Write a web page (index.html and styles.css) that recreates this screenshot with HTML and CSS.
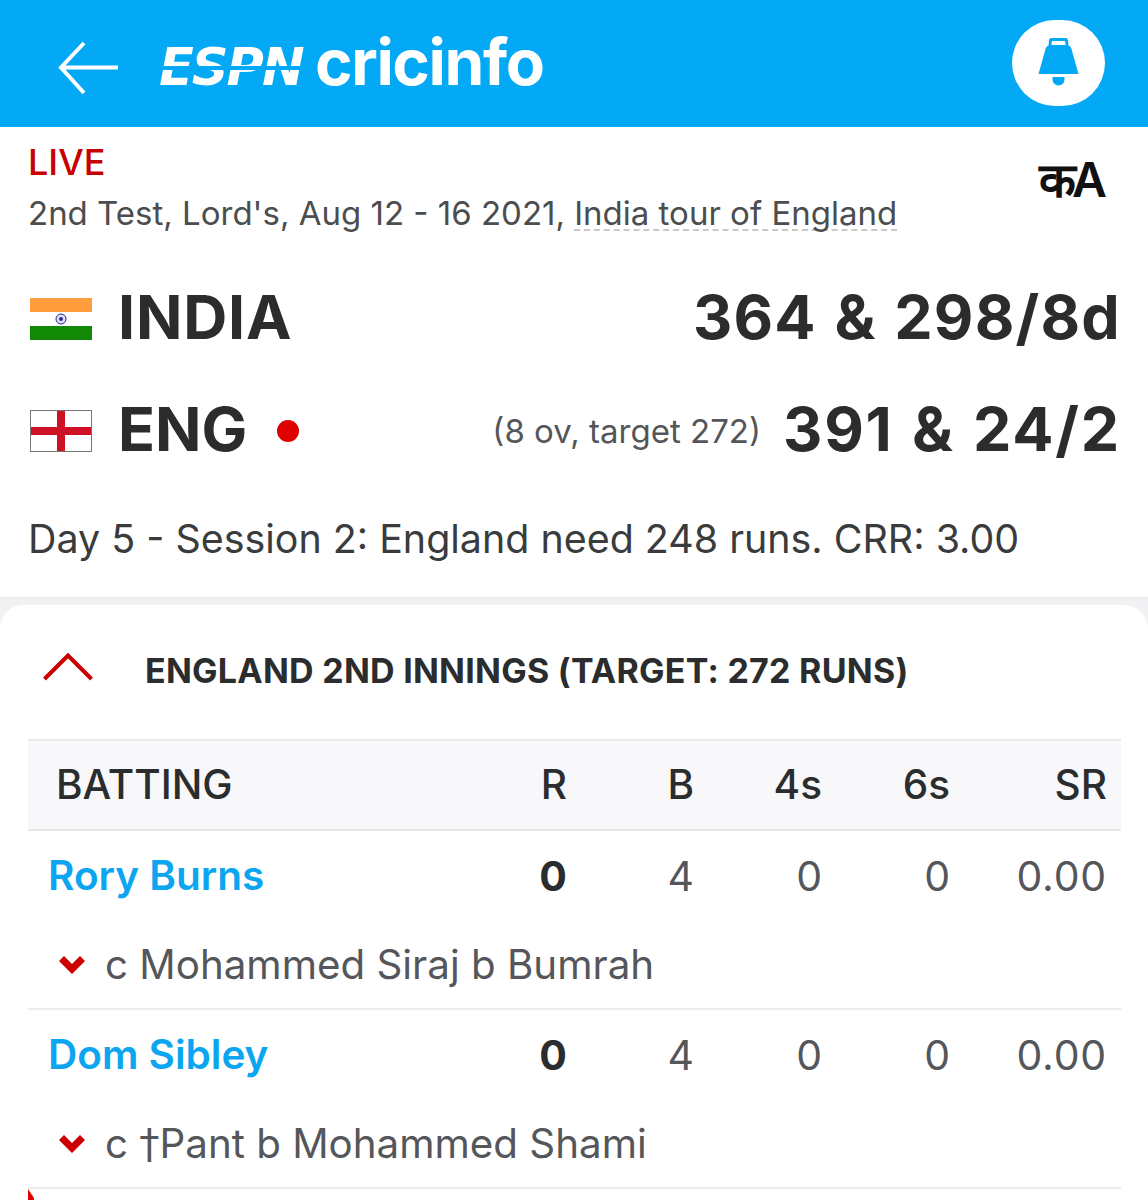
FILE: index.html
```html
<!DOCTYPE html>
<html lang="en">
<head>
<meta charset="utf-8">
<title>ESPNcricinfo</title>
<link rel="stylesheet" href="styles.css">
</head>
<body>
<header class="topbar">
  <svg class="back" viewBox="0 0 62 56" width="62" height="56"><path d="M61 27.500H4M27 3 4 27.500 27 53" fill="none" stroke="#fff" stroke-width="4"/></svg>
  <div class="logo"><span class="espn">ESPN</span><span class="cric">cricinfo</span></div>
  <div class="bell">
    <svg class="bell-icon" viewBox="0 0 42 48" width="42" height="48"><path fill="#03a9f5" fill-rule="evenodd" d="M13 0h14.500C29 0 30 1 30 2.500l.5 5c1.500.5 2.500 1.500 3 3.500l7 25H.5l7-25c.5-2 1.500-3 3-3.500l.5-5C11 1 12 0 13 0ZM15 3c-.8 0-1.200.4-1.300 1.200L13.400 7h14.200l-.3-2.800C27.200 3.400 26.800 3 26 3ZM14.500 39h12v2.500a6 6 0 0 1-12 0Z"/></svg>
  </div>
</header>
<section class="info">
  <div class="info-top">
    <div>
      <div class="live">LIVE</div>
      <div class="meta">2nd Test, Lord's, Aug 12 - 16 2021, <span class="tour">India tour of England</span></div>
    </div>
    <div class="lang">कA</div>
  </div>
  <div class="team team-first">
    <svg class="flag" viewBox="0 0 62 42" width="62" height="42">
      <rect width="62" height="14" fill="#ff9d3c"/><rect y="14" width="62" height="14" fill="#fff"/><rect y="28" width="62" height="14" fill="#128807"/>
      <circle cx="31" cy="21" r="5" fill="#dfe0f5" stroke="#2a2a8c" stroke-width="1"/><circle cx="31" cy="21" r="2" fill="#2a2a8c"/>
    </svg>
    <span class="team-name">INDIA</span>
    <span class="score">364 &amp; 298/8d</span>
  </div>
  <div class="team team-second">
    <svg class="flag" viewBox="0 0 62 42" width="62" height="42">
      <rect x=".5" y=".5" width="61" height="41" fill="#fff" stroke="#777"/><rect x="27" y="1" width="8" height="40" fill="#ce1124"/><rect x="1" y="17" width="60" height="8" fill="#ce1124"/>
    </svg>
    <span class="team-name">ENG</span>
    <span class="dot"></span>
    <span class="overs">(8 ov, target 272)</span>
    <span class="score">391 &amp; 24/2</span>
  </div>
  <p class="status">Day 5 - Session 2: England need 248 runs. CRR: 3.00</p>
</section>
<main class="card">
  <div class="innings">
    <svg class="caret" viewBox="0 0 50 28" width="50" height="28"><path d="M1.500 26 25 2.500 48.500 26" fill="none" stroke="#c00" stroke-width="4"/></svg>
    <h2 class="innings-title">ENGLAND 2ND INNINGS (TARGET: 272 RUNS)</h2>
  </div>
  <div class="table">
    <div class="row head"><span class="batter-head">BATTING</span><span>R</span><span>B</span><span>4s</span><span>6s</span><span>SR</span></div>
    <div class="player">
      <div class="row stats"><a class="name">Rory Burns</a><b>0</b><span>4</span><span>0</span><span>0</span><span>0.00</span></div>
      <div class="dismissal"><svg class="chev" viewBox="0 0 26 18" width="26" height="18"><path d="M0 5 5 0l8 8 8-8 5 5-13 13Z" fill="#c00"/></svg><span>c Mohammed Siraj b Bumrah</span></div>
    </div>
    <div class="player">
      <div class="row stats"><a class="name">Dom Sibley</a><b>0</b><span>4</span><span>0</span><span>0</span><span>0.00</span></div>
      <div class="dismissal"><svg class="chev" viewBox="0 0 26 18" width="26" height="18"><path d="M0 5 5 0l8 8 8-8 5 5-13 13Z" fill="#c00"/></svg><span>c <span class="dagger">†</span>Pant b Mohammed Shami</span></div>
    </div>
    <div class="next"></div>
  </div>
</main>
</body>
</html>
```
FILE: styles.css
```css
* { box-sizing: border-box; }
html, body { margin: 0; height: 1200px; overflow: hidden; }
body { background: #fff; font-family: Inter, Roboto, sans-serif; color: #2b2c2d; }

.topbar { height: 127px; background: #03a9f5; display: flex; align-items: center; padding: 0 43px 0 57px; }
.back { flex: none; margin-top: 9px; }
.logo { display: flex; align-items: baseline; margin-left: 40px; color: #fff; margin-top: -3px; }
.espn { font: italic 700 51px/1 "DejaVu Sans", sans-serif; width: 156px; letter-spacing: -2px; background: linear-gradient(#fff 0 47%, transparent 47% 54%, #fff 54%); -webkit-background-clip: text; background-clip: text; color: transparent; }
.cric { font: 700 64px/1 Inter, "Liberation Sans", sans-serif; letter-spacing: -1.400px; }
.bell { margin-left: auto; width: 93px; height: 86px; border-radius: 43px; background: #fff; display: flex; align-items: center; justify-content: center; margin-top: -1px; }
.bell-icon { margin-top: -2px; }

.info { padding: 15px 27px 0 28px; height: 471px; border-bottom: 1px solid #e8e8ea; }
.info-top { display: flex; justify-content: space-between; }
.live { font-size: 36px; line-height: 41px; font-weight: 500; color: #c70000; }
.meta { margin-top: 7px; font-size: 33px; line-height: 46px; color: #4c4d4e; }
.tour { text-decoration: underline dashed #c9c9c9 2px; text-underline-offset: 4px; text-decoration-skip-ink: none; }
.lang { font: 600 48px/1 Inter, "Noto Sans CJK SC", "DejaVu Sans", sans-serif; letter-spacing: -4px; color: #111; padding: 14px 18px 0 0; height: 62px; white-space: nowrap; }

.team { display: flex; align-items: center; height: 112px; }
.team-first { margin-top: 27px; }
.flag { flex: none; margin-left: 2px; }
.team-name { font-size: 61px; font-weight: 700; margin: 0 0 3px 26px; line-height: 1; letter-spacing: .8px; }
.team-second .team-name { letter-spacing: 0; }
.dot { width: 22px; height: 22px; border-radius: 50%; background: #e00000; margin-left: 30px; }
.overs { font-size: 33px; color: #55565a; margin-left: auto; margin-right: 22px; }
.score { font-size: 61px; font-weight: 700; line-height: 1; letter-spacing: 1.200px; word-spacing: 2px; margin-bottom: 3px; }
.team-second .score { letter-spacing: 1.800px; }
.team-first .score { margin-left: auto; }
.status { margin: 28px 0 0; font-size: 39.400px; line-height: 48px; color: #3a3b3c; }

.card { height: 602px; background: #f1f1f3; position: relative; }
.card::before { content: ""; display: block; height: 7px; background: #f1f1f3; }
.innings { background: #fff; border-radius: 24px 24px 0 0; height: 134px; display: flex; align-items: center; padding: 0 0 4px 43px; }
.caret { margin-bottom: 6px; }
.innings-title { margin: 0 0 0 52px; font-size: 34px; letter-spacing: .25px; font-weight: 700; color: #2b2c2d; white-space: nowrap; }
.table { background: #fff; padding: 0 27px 0 28px; height: 461px; overflow: hidden; }
.row { display: grid; grid-template-columns: 1fr 128px 127px 128px 128px 157px; padding-right: 14px; text-align: right; align-items: center; }
.head { height: 92px; padding-bottom: 2px; background: #f8f8fa; border-top: 2px solid #eaeaec; border-bottom: 2px solid #e6e6e8; font-size: 40.500px; font-weight: 500; color: #2b2c2d; }
.batter-head { text-align: left; padding-left: 28px; }
.stats { height: 89px; font-size: 41px; color: #55565a; }
.stats b { color: #2b2c2d; font-weight: 700; }
.stats span:last-child { letter-spacing: .8px; }
.name { text-align: left; padding-left: 20px; color: #0ba5f0; font-weight: 600; font-size: 40.500px; }
.dismissal { height: 90px; border-bottom: 2px solid #ececee; display: flex; align-items: center; padding: 0 0 0 31px; font-size: 40.300px; color: #55565a; }
.dagger { font-family: "DejaVu Sans", sans-serif; }
.chev { flex: none; margin-right: 20px; margin-top: 2px; }
.next { height: 30px; width: 6px; background: #e00000; clip-path: polygon(0 0, 100% 30%, 100% 100%, 0 100%); }
```
